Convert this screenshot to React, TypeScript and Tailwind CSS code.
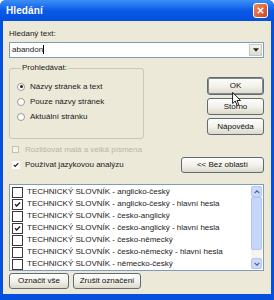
import React from 'react';

const items = [
  { label: 'TECHNICKÝ SLOVNÍK - anglicko-český', checked: false },
  { label: 'TECHNICKÝ SLOVNÍK - anglicko-český - hlavní hesla', checked: true },
  { label: 'TECHNICKÝ SLOVNÍK - česko-anglický', checked: false },
  { label: 'TECHNICKÝ SLOVNÍK - česko-anglický - hlavní hesla', checked: true },
  { label: 'TECHNICKÝ SLOVNÍK - česko-německý', checked: false },
  { label: 'TECHNICKÝ SLOVNÍK - česko-německý - hlavní hesla', checked: false },
  { label: 'TECHNICKÝ SLOVNÍK - německo-český', checked: false },
];

const btn =
  'flex items-center justify-center rounded-[3px] border border-[#5d6b7a] bg-gradient-to-b from-[#fdfdfb] via-[#f3f2ec] to-[#dcd9cb] text-[#111]';

function Check({ size = 'w-[11px] h-[11px]' }: { size?: string }) {
  return (
    <svg viewBox="0 0 11 11" className={size}>
      <path d="M2.5 5.2 L4.5 7.4 L8.6 3" fill="none" stroke="#1a1a1a" strokeWidth="1.6" />
    </svg>
  );
}

function Radio({ on, label }: { on?: boolean; label: string }) {
  return (
    <div className="flex items-center h-[15px]">
      <span className="w-[8px] h-[8px] rounded-full border border-[#9a9a90] bg-white flex items-center justify-center">
        {on && <span className="w-[3px] h-[3px] rounded-full bg-[#222]" />}
      </span>
      <span className="ml-[5px]">{label}</span>
    </div>
  );
}

export default function App() {
  return (
    <div
      className="relative w-[274px] h-[300px] bg-[#0650e0] rounded-t-[6px] flex flex-col text-[8px] leading-[10px] text-[#1a1a1a]"
      style={{ fontFamily: '"Liberation Sans", Arial, sans-serif' }}
    >
      {/* Title bar */}
      <div className="h-[21px] shrink-0 rounded-t-[6px] bg-gradient-to-b from-[#3d8ff5] via-[#0a5ae8] to-[#0450dc] flex items-center justify-between pl-[6px] pr-[6px]">
        <span className="text-white font-bold text-[10px] leading-[12px] tracking-[0.1px]">Hledání</span>
        <span className="w-[15px] h-[15px] rounded-[3px] border border-white bg-gradient-to-br from-[#f08a5c] to-[#d2401a] flex items-center justify-center">
          <svg viewBox="0 0 10 10" className="w-[9px] h-[9px]">
            <path d="M2 2 L8 8 M8 2 L2 8" stroke="white" strokeWidth="1.7" />
          </svg>
        </span>
      </div>

      {/* Body */}
      <div className="mx-[3px] mb-[6px] flex-1 bg-[#ece9d8] pl-[6px] pr-[7px] pt-[8px] flex flex-col">
        <div className="pl-[0px]">Hledaný text:</div>
        <div className="mt-[3px] h-[16px] border border-[#7f9db9] bg-white flex items-center">
          <span className="pl-[2px] flex-1">
            abandon<span className="inline-block w-[1px] h-[9px] bg-black align-middle" />
          </span>
          <span className="w-[13px] h-[12px] mr-[1px] bg-gradient-to-b from-[#f5f4ef] to-[#dcdad0] border border-[#c9c7bb] flex items-center justify-center">
            <svg viewBox="0 0 7 4" className="w-[6px] h-[4px]">
              <path d="M0 0 L7 0 L3.5 4 Z" fill="#222" />
            </svg>
          </span>
        </div>

        <div className="mt-[5px] flex">
          <fieldset className="w-[135px] h-[76px] border border-[#c9c7b5] rounded-[3px] pl-[7px] pt-[6px]">
            <legend className="ml-[4px] px-[1px]">Prohledávat:</legend>
            <Radio on label="Názvy stránek a text" />
            <Radio label="Pouze názvy stránek" />
            <Radio label="Aktuální stránku" />
          </fieldset>
          <div className="ml-auto mt-[14px] flex flex-col gap-[3px] w-[57px]">
            <div className={`${btn} h-[18px] border-[#2e2e2e] shadow-[inset_0_0_0_1px_#8a8a8a]`}>OK</div>
            <div className={`${btn} h-[17px]`}>Storno</div>
            <div className={`${btn} h-[17px]`}>Nápověda</div>
          </div>
        </div>

        <div className="mt-[3px] flex items-end">
          <div className="flex flex-col">
            <div className="flex items-center h-[15px] pl-[3px] text-[#b7b5a8]">
              <span className="w-[7px] h-[7px] border border-[#c4c2b6] bg-[#f2f1ea]" />
              <span className="ml-[6px]">Rozlišovat malá a velká písmena</span>
            </div>
            <div className="flex items-center h-[15px] pl-[3px]">
              <span className="w-[8px] h-[8px] flex items-center justify-center bg-white">
                <Check size="w-[8px] h-[8px]" />
              </span>
              <span className="ml-[5px]">Používat jazykovou analýzu</span>
            </div>
          </div>
          <div className={`${btn} ml-auto w-[83px] h-[16px] mb-[-1px]`}>&lt;&lt; Bez oblastí</div>
        </div>

        <div className="mt-[12px] h-[87px] border border-[#7f9db9] bg-white flex">
          <div className="flex-1 pt-[1px] pl-[2px]">
            {items.map((it) => (
              <div key={it.label} className="flex items-center h-[12px] whitespace-nowrap">
                <span className="w-[11px] h-[11px] border border-[#3a3a3a] bg-white flex items-center justify-center shrink-0">
                  {it.checked && <Check size="w-[9px] h-[9px]" />}
                </span>
                <span className="ml-[4px]">{it.label}</span>
              </div>
            ))}
          </div>
          <div className="w-[11px] mr-[1px] my-[1px] flex flex-col bg-[#f4f4f0]">
            <div className="h-[11px] rounded-[2px] bg-[#c9d8fb] border border-[#b6c8f2] flex items-center justify-center">
              <svg viewBox="0 0 7 5" className="w-[6px] h-[4px]">
                <path d="M0.5 4 L3.5 1 L6.5 4" fill="none" stroke="#4d6185" strokeWidth="1.4" />
              </svg>
            </div>
            <div className="h-[53px] rounded-[2px] bg-[#c6d6fa] border border-[#b3c5f0]" />
            <div className="flex-1" />
            <div className="h-[11px] rounded-[2px] bg-[#c9d8fb] border border-[#b6c8f2] flex items-center justify-center">
              <svg viewBox="0 0 7 5" className="w-[6px] h-[4px]">
                <path d="M0.5 1 L3.5 4 L6.5 1" fill="none" stroke="#4d6185" strokeWidth="1.4" />
              </svg>
            </div>
          </div>
        </div>

        <div className="mt-[2px] flex gap-[4px]">
          <div className={`${btn} w-[60px] h-[16px]`}>Označit vše</div>
          <div className={`${btn} w-[68px] h-[16px]`}>Zrušit označení</div>
        </div>
      </div>

      {/* Mouse pointer over OK */}
      <svg viewBox="0 0 11 17" className="absolute left-[232px] top-[92px] w-[10px] h-[15px]">
        <path d="M0.5 0.5 L0.5 13 L3.5 10.2 L5.7 15.5 L7.6 14.7 L5.5 9.6 L9.5 9.6 Z" fill="white" stroke="black" strokeWidth="1" strokeLinejoin="round" />
      </svg>
    </div>
  );
}
